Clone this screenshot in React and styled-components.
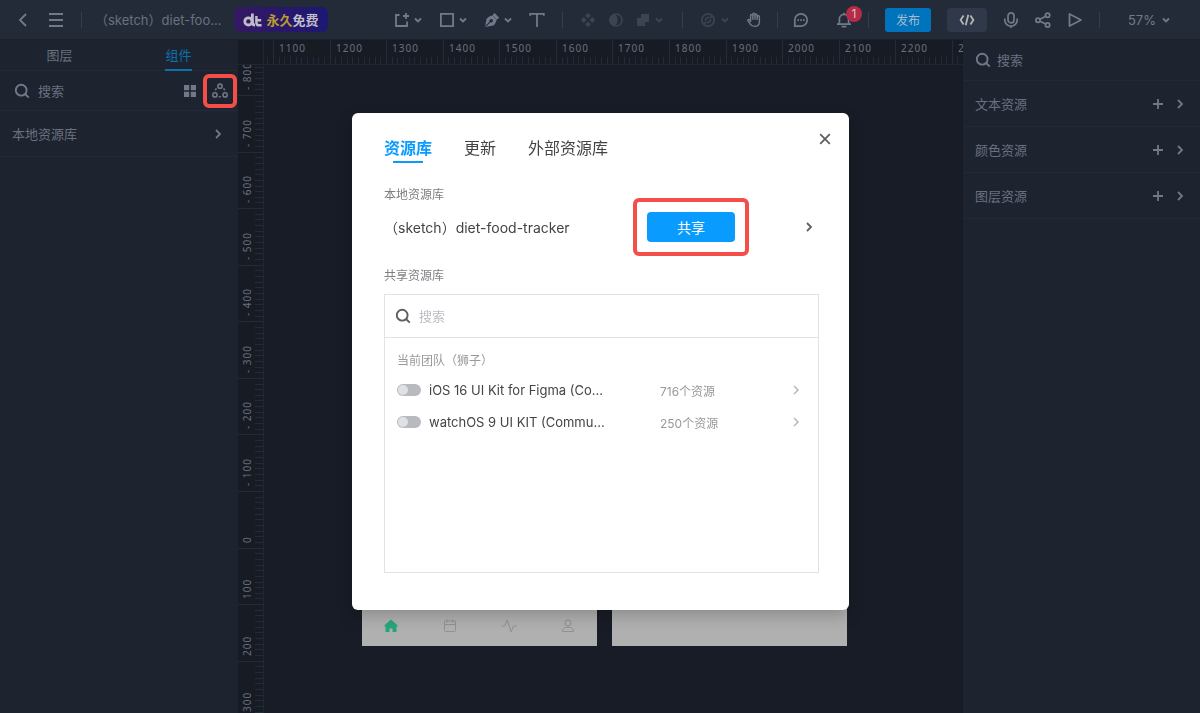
import styled, { createGlobalStyle } from "styled-components";

const GlobalStyle = createGlobalStyle`
  * {
    box-sizing: border-box;
  }

  body {
    margin: 0;
    background-color: #181c26;
    color: #6b7080;
    font-family: Inter, "Noto Sans CJK SC", sans-serif;
    font-size: 13px;
  }

  button,
  input {
    font: inherit;
    color: inherit;
  }

  button {
    display: inline-flex;
    align-items: center;
    justify-content: center;
    flex: none;
    padding: 0;
    border: none;
    background: none;
    cursor: pointer;
  }

  svg {
    display: block;
    flex: none;
  }
`;

/* ---------- icons ---------- */

const Stroke = styled.svg.attrs({ fill: "none", stroke: "currentColor" })``;

function Chevron({ size = 12, width = 1.8, dir = "right" }) {
  const d = dir === "down" ? "M3 4.5l3 3 3-3" : "M4 2l4 4-4 4";
  return (
    <Stroke width={size} height={size} viewBox="0 0 12 12" strokeWidth={width}>
      <path d={d} />
    </Stroke>
  );
}

function SearchIcon() {
  return (
    <Stroke width="16" height="16" viewBox="0 0 16 16" strokeWidth="1.9">
      <circle cx="7.2" cy="7.2" r="5.4" />
      <path d="M11 11l3.8 3.6" />
    </Stroke>
  );
}

function PlusIcon() {
  return (
    <Stroke width="12" height="12" viewBox="0 0 12 12" strokeWidth="1.8">
      <path d="M6 1v10M1 6h10" />
    </Stroke>
  );
}

function BackIcon() {
  return (
    <Stroke width="16" height="16" viewBox="0 0 16 16" strokeWidth="1.8">
      <path d="M11 2L5 8l6 6" />
    </Stroke>
  );
}

function MenuIcon() {
  return (
    <Stroke width="16" height="16" viewBox="0 0 16 16" strokeWidth="1.8">
      <path d="M1 2h14M1 8h14M1 14h14" />
    </Stroke>
  );
}

function LogoIcon() {
  return (
    <Stroke width="20" height="14" viewBox="0 0 20 14" strokeWidth="2.8">
      <circle cx="5.4" cy="8.4" r="3.6" />
      <path d="M9.4 0.6v7.8c0 2.4 1 3.8 2.6 3.8" />
      <path
        d="M13.4 3v6.4c0 2 1 2.9 2.6 2.9h2.6M13.4 7.2h4.8"
        strokeWidth="2.5"
      />
    </Stroke>
  );
}

function ArtboardIcon() {
  return (
    <Stroke width="16" height="16" viewBox="0 0 16 16" strokeWidth="1.8">
      <path d="M5.5 3H2v11h11V9.5M12 1v6M9 4h6" />
    </Stroke>
  );
}

function RectIcon() {
  return (
    <Stroke width="16" height="16" viewBox="0 0 16 16" strokeWidth="1.8">
      <path d="M1.9 1.9h12.2v12.2H1.9z" />
    </Stroke>
  );
}

function PenIcon() {
  return (
    <svg width="16" height="16" viewBox="0 0 16 16">
      <path
        d="M1 15L2.6 6.8C4.4 4.6 6.4 4.4 8.2 3.6l4.4 4.4c-.8 1.8-1 3.8-3.2 5.4z"
        fill="currentColor"
      />
      <path d="M8.4 3.4l2.1-2.4 4.7 4.700-2.400 2.100z" fill="currentColor" />
      <path d="M1.6 14.4L6.6 9.4" stroke="#242b38" strokeWidth="1.2" />
      <circle cx="7.2" cy="8.8" r="1.8" fill="#242b38" />
    </svg>
  );
}

function TextIcon() {
  return (
    <Stroke width="16" height="16" viewBox="0 0 16 16" strokeWidth="1.8">
      <path d="M1.2 3.8V1.9h13.6v1.9M8 1.9V15" />
    </Stroke>
  );
}

function ComponentIcon() {
  return (
    <svg width="16" height="16" viewBox="0 0 16 16" fill="currentColor">
      <path d="M8 0.8l2.9 2.9L8 6.6 5.1 3.7zM8 9.4l2.9 2.9L8 15.2l-2.9-2.9zM3.7 5.1L6.6 8l-2.9 2.9L0.8 8zM12.3 5.1L15.2 8l-2.900 2.900L9.400 8z" />
    </svg>
  );
}

function MaskIcon() {
  return (
    <svg width="16" height="16" viewBox="0 0 16 16">
      <circle
        cx="8"
        cy="8"
        r="6"
        fill="none"
        stroke="currentColor"
        strokeWidth="1.6"
      />
      <path d="M7 2a6 6 0 0 0 0 12c3.4-2.6 3.4-9.4 0-12z" fill="currentColor" />
    </svg>
  );
}

function UnionIcon() {
  return (
    <svg width="14" height="14" viewBox="0 0 14 14" fill="currentColor">
      <path d="M5 1h8v8H9v4H1V5h4z" />
    </svg>
  );
}

function SlashIcon() {
  return (
    <Stroke width="16" height="16" viewBox="0 0 16 16" strokeWidth="1.7">
      <circle cx="8" cy="8" r="6.2" />
      <path d="M5.8 9a2.4 2.4 0 0 1 3.2-3.2M10.2 7a2.4 2.4 0 0 1-3.2 3.2M3.6 12.4l2.400-2.400M10 6l2.400-2.400" />
    </Stroke>
  );
}

function HandIcon() {
  return (
    <Stroke
      width="16"
      height="16"
      viewBox="0 0 16 16"
      strokeWidth="1.4"
      strokeLinecap="round"
      strokeLinejoin="round"
    >
      <path d="M4.6 9.4V3.6a1.1 1.1 0 0 1 2.2 0V2.2a1.1 1.1 0 0 1 2.2 0v1a1.1 1.1 0 0 1 2.2 0v1.6a1.1 1.1 0 0 1 2.2 0v4.6c0 3.2-2 5-4.8 5-2.4 0-3.6-1-4.6-2.6L1.9 8.6c-.5-1 .8-1.6 1.5-.8z" />
      <path d="M6.8 3.6v3.6M9 3.2v4M11.2 4v3.4" />
    </Stroke>
  );
}

function ChatIcon() {
  return (
    <svg width="16" height="16" viewBox="0 0 16 16">
      <path
        d="M1.8 14.2V8A6.2 6.2 0 1 1 8 14.2z"
        fill="none"
        stroke="currentColor"
        strokeWidth="1.7"
      />
      <path
        d="M4.4 7.3h1.6v1.6H4.4zM7.2 7.3h1.6v1.6H7.2zM10 7.3h1.6v1.6H10z"
        fill="currentColor"
      />
    </svg>
  );
}

function BellIcon() {
  return (
    <Stroke width="16" height="16" viewBox="0 0 16 16" strokeWidth="1.7">
      <path d="M1 12.2h14M3.4 12V7a4.6 4.6 0 0 1 9.2 0v5M8 2.5V0.8" />
      <path d="M5.6 14.6h4.8" />
    </Stroke>
  );
}

function CodeIcon() {
  return (
    <Stroke width="16" height="16" viewBox="0 0 16 16" strokeWidth="1.8">
      <path d="M4.6 3.4L1.6 8l3 4.6M11.4 3.4l3 4.6-3 4.6M9.3 2.8L6.7 13.2" />
    </Stroke>
  );
}

function MicIcon() {
  return (
    <Stroke width="16" height="16" viewBox="0 0 16 16" strokeWidth="1.7">
      <rect x="5" y="0.9" width="6" height="10" rx="3" />
      <path d="M1.8 6.5v1.4a6.2 6.2 0 0 0 12.4 0V6.5M8 14v2" />
    </Stroke>
  );
}

function ShareIcon() {
  return (
    <Stroke width="16" height="16" viewBox="0 0 16 16" strokeWidth="1.8">
      <circle cx="3" cy="8.2" r="2.1" />
      <circle cx="12.6" cy="3.2" r="2.1" />
      <circle cx="12.6" cy="13" r="2.1" />
      <path d="M5 7.2l5.7-3M5 9.2l5.7 2.8" />
    </Stroke>
  );
}

function PlayIcon() {
  return (
    <Stroke
      width="16"
      height="16"
      viewBox="0 0 16 16"
      strokeWidth="1.8"
      strokeLinejoin="round"
    >
      <path d="M2.5 2v12L14 8z" />
    </Stroke>
  );
}

function GridIcon() {
  return (
    <svg width="14" height="14" viewBox="0 0 14 14" fill="currentColor">
      <path d="M1 1h5.2v5.2H1zM7.8 1H13v5.2H7.8zM1 7.8h5.2V13H1zM7.8 7.8H13V13H7.8z" />
    </svg>
  );
}

function LibraryIcon() {
  return (
    <Stroke width="16" height="16" viewBox="0 0 16 16" strokeWidth="1.6">
      <circle cx="8" cy="3.2" r="2.1" />
      <circle cx="2.9" cy="11.9" r="2.1" />
      <circle cx="13.1" cy="11.9" r="2.1" />
      <path
        d="M6.8 13.8h2.4M4.4 5.4L2.6 8.2M11.6 5.4l1.8 2.8"
        strokeDasharray="2 1.2"
      />
    </Stroke>
  );
}

function CloseIcon() {
  return (
    <Stroke width="12" height="12" viewBox="0 0 12 12" strokeWidth="1.8">
      <path d="M1.2 1.2l9.6 9.6M10.8 1.2l-9.6 9.6" />
    </Stroke>
  );
}

function HomeIcon() {
  return (
    <svg width="14" height="14" viewBox="0 0 14 14" fill="#27a57c">
      <path d="M7 .5l6.5 5.7v1.2H12.5V13H8.5V9.5h-3V13h-4V7.4H.5V6.2z" />
    </svg>
  );
}

function CalendarIcon() {
  return (
    <Stroke width="14" height="14" viewBox="0 0 14 14" strokeWidth="1">
      <rect x="1.5" y="2" width="11" height="10.5" rx="1" />
      <path d="M1.5 5.5h11M4 .5v3M10 .5v3" />
    </Stroke>
  );
}

function PulseIcon() {
  return (
    <Stroke width="16" height="14" viewBox="0 0 16 14" strokeWidth="1">
      <path d="M.5 7h3.2L6.2 1l4 12 2.3-6h3" strokeLinejoin="round" />
    </Stroke>
  );
}

function UserIcon() {
  return (
    <Stroke width="14" height="14" viewBox="0 0 14 14" strokeWidth="1">
      <circle cx="7" cy="4" r="3" />
      <path d="M1.5 12.5c0-2.5 1.2-4 3.2-4h4.6c2 0 3.2 1.5 3.2 4z" />
    </Stroke>
  );
}

/* ---------- layout ---------- */

const Page = styled.div`
  display: flex;
  flex-direction: column;
  height: 100vh;
  overflow: hidden;
`;

const TopBar = styled.header`
  display: flex;
  align-items: center;
  justify-content: space-between;
  flex: none;
  height: 40px;
  padding: 0 28px 0 15px;
  background-color: #242b38;
  border-bottom: 1px solid #1b212c;
`;

const Group = styled.div`
  display: flex;
  align-items: center;
  gap: ${({ $gap = 0 }) => $gap}px;
`;

const Divider = styled.span`
  width: 1px;
  height: 16px;
  background-color: #363d4b;
`;

const Tools = styled.div`
  display: flex;
  align-items: center;
  gap: 15px;
  margin-left: 40px;

  ${Divider} {
    margin: 0 2px;
  }
`;

const Title = styled.span`
  width: 126px;
  white-space: nowrap;
`;

const PromoBadge = styled.a`
  display: flex;
  align-items: center;
  justify-content: center;
  gap: 3px;
  width: 94px;
  height: 25px;
  border-radius: 6px;
  background-image: linear-gradient(90deg, #351862, #1c1872);
  color: #bfbcc9;
  font-weight: 700;
  text-decoration: none;
`;

const Yellow = styled.span`
  color: #b89b34;
`;

const Tool = styled.button`
  gap: ${({ $gap = 2 }) => $gap}px;
  color: ${({ $dim }) => ($dim ? "#3c4352" : "#73798a")};
`;

const Bell = styled(Tool)`
  position: relative;
`;

const Count = styled.span`
  position: absolute;
  top: -6px;
  right: -10px;
  width: 16px;
  border-radius: 8px;
  background-color: #b62c46;
  color: #cfc3ca;
  font-size: 12px;
  line-height: 16px;
`;

const PublishButton = styled.button`
  width: 46px;
  height: 24px;
  border-radius: 3px;
  background-color: #0073bd;
  color: #a9bccb;
  font-size: 12px;
`;

const CodeButton = styled.button`
  width: 40px;
  height: 24px;
  border-radius: 4px;
  background-color: #303949;
  color: #b5b5b5;
`;

const Workspace = styled.div`
  display: grid;
  grid-template-columns: 238px 1fr 237px;
  flex: 1;
  min-height: 0;
`;

const Panel = styled.aside`
  background-color: #1d232f;
`;

const PanelTabs = styled.nav`
  display: grid;
  grid-template-columns: 1fr 1fr;
  justify-items: center;
  height: 31px;
  border-bottom: 1px solid #232a37;
`;

const PanelTab = styled.button`
  height: 31px;
  border-bottom: 2px solid ${({ $active }) => ($active ? "#0b70ae" : "transparent")};
  color: ${({ $active }) => ($active ? "#0b70ae" : "#6b7080")};
`;

const PanelRow = styled.div`
  display: flex;
  align-items: center;
  gap: ${({ $gap = 6 }) => $gap}px;
  height: ${({ $height = 46 }) => $height}px;
  padding: 0 ${({ $end = 14 }) => $end}px 0 ${({ $start = 12 }) => $start}px;
  border-bottom: 1px solid #232a37;
  color: #737889;
`;

const RowLabel = styled.span`
  flex: 1;
  color: #6b7080;
`;

const SearchInput = styled.input`
  flex: 1;
  min-width: 0;
  padding: 0 2px;
  border: none;
  outline: none;
  background: none;

  &::placeholder {
    color: ${({ $light }) => ($light ? "#bbbec3" : "#6b7080")};
    opacity: 1;
  }
`;

const LibraryButton = styled.button`
  width: 34px;
  height: 34px;
  border: 4px solid #f44e49;
  border-radius: 6px;
`;

/* ---------- canvas ---------- */

const Stage = styled.main`
  display: grid;
  grid-template-columns: 26px 1fr;
  grid-template-rows: 25px 1fr;
  min-width: 0;
  min-height: 0;
  background-color: #181c26;
`;

const RulerCell = styled.div`
  overflow: hidden;
  background-color: #171b24;
  border-right: ${({ $right }) => ($right ? "1px solid #202734" : "none")};
  border-bottom: ${({ $bottom }) => ($bottom ? "1px solid #202734" : "none")};
`;

const RulerText = styled.text`
  fill: #6a6f7e;
  font-family: "Noto Sans", sans-serif;
  font-size: 10px;
  letter-spacing: 1px;
`;

const Canvas = styled.div`
  position: relative;
  overflow: hidden;
`;

const Artboard = styled.section`
  position: absolute;
  top: 85px;
  left: ${({ $x }) => $x}px;
  display: flex;
  flex-direction: column;
  justify-content: flex-end;
  width: 235px;
  height: 496px;
  background-color: #b0b0b0;
`;

const TabBar = styled.div`
  display: grid;
  grid-template-columns: repeat(4, 1fr);
  justify-items: center;
  align-items: center;
  height: 40px;
  color: #8f9192;
`;

/* ---------- dialog ---------- */

const Overlay = styled.div`
  position: fixed;
  inset: 0;
  display: flex;
  align-items: center;
  justify-content: center;
  padding: 10px 0 0 1px;
`;

const Dialog = styled.section`
  position: relative;
  width: 497px;
  padding: 24px 30px 37px 32px;
  border-radius: 6px;
  background-color: #fff;
  box-shadow: 0 6px 16px rgba(0, 0, 0, 0.2);
  color: #444;
`;

const CloseButton = styled.button`
  position: absolute;
  top: 20px;
  right: 18px;
  color: #5d5f63;
`;

const DialogTabs = styled.nav`
  display: flex;
  gap: 32px;
  margin-bottom: 26px;
`;

const DialogTab = styled.button`
  position: relative;
  height: 24px;
  padding-bottom: 4px;
  color: ${({ $active }) => ($active ? "#0a9bff" : "#444")};
  font-size: 16px;
  font-weight: ${({ $active }) => ($active ? 700 : 400)};

  &::after {
    content: "";
    position: absolute;
    top: 24px;
    left: 9px;
    right: 9px;
    height: 2px;
    background-color: ${({ $active }) => ($active ? "#0a9bff" : "transparent")};
  }
`;

const SectionTitle = styled.h2`
  margin: 0;
  color: #7c7f83;
  font-size: 12px;
  font-weight: 400;
  line-height: 16px;
`;

const LocalLibrary = styled.div`
  display: grid;
  grid-template-columns: 263px 88px 1fr;
  align-items: center;
  height: 40px;
  margin: 4px 0 21px;
  font-size: 14px;
`;

const Highlight = styled.span`
  position: relative;

  &::after {
    content: "";
    position: absolute;
    inset: -14px;
    border: 4px solid #f44e49;
    border-radius: 6px;
    pointer-events: none;
  }
`;

const ShareButton = styled.button`
  display: flex;
  width: 88px;
  height: 30px;
  border-radius: 4px;
  background-color: #0a9bff;
  color: #fff;
`;

const OpenButton = styled.button`
  justify-self: end;
  margin-right: ${({ $end = 0 }) => $end}px;
  color: ${({ $pale }) => ($pale ? "#b9bbbf" : "#5d5f63")};
`;

const LibraryBox = styled.div`
  min-height: 279px;
  margin-top: 10px;
  border: 1px solid #e3e3e3;
`;

const LibrarySearch = styled.div`
  display: flex;
  align-items: center;
  gap: 6px;
  height: 43px;
  padding: 0 10px;
  border-bottom: 1px solid #e3e3e3;
  color: #5d5f63;
`;

const TeamName = styled.h3`
  margin: 14px 12px 4px;
  color: #97999c;
  font-size: 12px;
  font-weight: 400;
  line-height: 18px;
`;

const LibraryRow = styled.div`
  display: grid;
  grid-template-columns: 263px 1fr 12px;
  align-items: center;
  height: 32px;
  padding: 0 16px 0 12px;
`;

const LibraryName = styled.label`
  display: flex;
  align-items: center;
  gap: 8px;
  font-size: 13px;
`;

const Amount = styled.span`
  color: #97999c;
  font-size: 12px;
`;

const Toggle = styled.input`
  appearance: none;
  display: flex;
  align-items: center;
  flex: none;
  width: 24px;
  height: 12px;
  margin: 0;
  padding: 1px;
  border-radius: 6px;
  background-color: #b7bbc0;

  &::before {
    content: "";
    width: 10px;
    height: 10px;
    border-radius: 50%;
    background-color: #dfe1e4;
  }

  &:checked {
    justify-content: flex-end;
    background-color: #0a9bff;
  }
`;

const STEP = 56.57;

const styles = ["文本资源", "颜色资源", "图层资源"];

const libraries = [
  { name: "iOS 16 UI Kit for Figma (Co...", amount: "716个资源" },
  { name: "watchOS 9 UI KIT (Commu...", amount: "250个资源" },
];

function Ruler({ first, origin, count, vertical }) {
  const marks = Array.from({ length: count }, (_, i) => ({
    value: first + i * 100,
    at: origin + i * STEP,
  }));
  const minor = Array.from({ length: (count + 1) * 10 }, (_, i) =>
    Math.round(origin - STEP + (i * STEP) / 10)
  );

  if (vertical) {
    return (
      <svg width="25" height="100%">
        {minor.map((y) => (
          <rect key={y} x="17" y={y} width="8" height="1" fill="#242b38" />
        ))}
        {marks.map(({ value, at }) => (
          <g key={value}>
            <rect y={Math.round(at)} width="25" height="1" fill="#242b38" />
            <RulerText transform={`translate(13 ${Math.round(at) - 5}) rotate(-90)`}>
              {value < 0 ? `- ${-value}` : value}
            </RulerText>
          </g>
        ))}
      </svg>
    );
  }

  return (
    <svg width="100%" height="24">
      {minor.map((x) => (
        <rect key={x} x={x} y="17" width="1" height="7" fill="#242b38" />
      ))}
      {marks.map(({ value, at }) => (
        <g key={value}>
          <rect x={Math.round(at)} width="1" height="24" fill="#242b38" />
          <RulerText x={Math.round(at) + 6} y="12">
            {value}
          </RulerText>
        </g>
      ))}
    </svg>
  );
}

function Header() {
  return (
    <TopBar>
      <Group $gap={17}>
        <Tool aria-label="返回">
          <BackIcon />
        </Tool>
        <Tool aria-label="菜单">
          <MenuIcon />
        </Tool>
        <Group $gap={13}>
          <Divider />
          <Title>（sketch）diet-foo...</Title>
          <PromoBadge href="#promo">
            <LogoIcon />
            <span>
              <Yellow>永久</Yellow>免费
            </span>
          </PromoBadge>
        </Group>
      </Group>

      <Tools>
        <Tool aria-label="画板">
          <ArtboardIcon />
          <Chevron dir="down" />
        </Tool>
        <Tool aria-label="矩形">
          <RectIcon />
          <Chevron dir="down" />
        </Tool>
        <Tool aria-label="钢笔">
          <PenIcon />
          <Chevron dir="down" />
        </Tool>
        <Tool aria-label="文本">
          <TextIcon />
        </Tool>
        <Divider />
        <Group $gap={12}>
          <Tool $dim aria-label="组件">
            <ComponentIcon />
          </Tool>
          <Tool $dim aria-label="蒙版">
            <MaskIcon />
          </Tool>
          <Tool $dim $gap={3} aria-label="布尔运算">
            <UnionIcon />
            <Chevron dir="down" />
          </Tool>
        </Group>
        <Divider />
        <Tool $dim $gap={3} aria-label="描边">
          <SlashIcon />
          <Chevron dir="down" />
        </Tool>
        <Group $gap={13}>
          <Tool aria-label="移动">
            <HandIcon />
          </Tool>
          <Divider />
          <Tool aria-label="评论">
            <ChatIcon />
          </Tool>
        </Group>
      </Tools>

      <Group $gap={16}>
        <Bell aria-label="通知">
          <BellIcon />
          <Count>1</Count>
        </Bell>
        <Divider />
        <PublishButton>发布</PublishButton>
        <CodeButton aria-label="代码">
          <CodeIcon />
        </CodeButton>
        <Tool aria-label="语音">
          <MicIcon />
        </Tool>
        <Tool aria-label="分享">
          <ShareIcon />
        </Tool>
        <Tool aria-label="播放">
          <PlayIcon />
        </Tool>
        <Group $gap={28}>
          <Divider />
          <Tool $gap={4}>
            57%
            <Chevron dir="down" />
          </Tool>
        </Group>
      </Group>
    </TopBar>
  );
}

function LeftPanel() {
  return (
    <Panel>
      <PanelTabs>
        <PanelTab>图层</PanelTab>
        <PanelTab $active>组件</PanelTab>
      </PanelTabs>
      <PanelRow $height={40} $start={14} $end={1}>
        <SearchIcon />
        <SearchInput placeholder="搜索" aria-label="搜索组件" />
        <button aria-label="网格视图">
          <GridIcon />
        </button>
        <LibraryButton aria-label="资源库">
          <LibraryIcon />
        </LibraryButton>
      </PanelRow>
      <PanelRow>
        <RowLabel>本地资源库</RowLabel>
        <button aria-label="展开本地资源库">
          <Chevron />
        </button>
      </PanelRow>
    </Panel>
  );
}

function RightPanel() {
  return (
    <Panel>
      <PanelRow $height={41} $gap={4}>
        <SearchIcon />
        <SearchInput placeholder="搜索" aria-label="搜索资源" />
      </PanelRow>
      {styles.map((name) => (
        <PanelRow key={name} $gap={10}>
          <RowLabel>{name}</RowLabel>
          <button aria-label={`添加${name}`}>
            <PlusIcon />
          </button>
          <button aria-label={`展开${name}`}>
            <Chevron />
          </button>
        </PanelRow>
      ))}
    </Panel>
  );
}

function LibraryDialog() {
  return (
    <Overlay>
      <Dialog role="dialog" aria-label="资源库">
        <CloseButton aria-label="关闭">
          <CloseIcon />
        </CloseButton>
        <DialogTabs>
          <DialogTab $active>资源库</DialogTab>
          <DialogTab>更新</DialogTab>
          <DialogTab>外部资源库</DialogTab>
        </DialogTabs>

        <SectionTitle>本地资源库</SectionTitle>
        <LocalLibrary>
          <span>（sketch）diet-food-tracker</span>
          <Highlight>
            <ShareButton>共享</ShareButton>
          </Highlight>
          <OpenButton $end={4} aria-label="打开本地资源库">
            <Chevron />
          </OpenButton>
        </LocalLibrary>

        <SectionTitle>共享资源库</SectionTitle>
        <LibraryBox>
          <LibrarySearch>
            <SearchIcon />
            <SearchInput $light placeholder="搜索" aria-label="搜索资源库" />
          </LibrarySearch>
          <TeamName>当前团队（狮子）</TeamName>
          {libraries.map(({ name, amount }) => (
            <LibraryRow key={name}>
              <LibraryName>
                <Toggle type="checkbox" />
                {name}
              </LibraryName>
              <Amount>{amount}</Amount>
              <OpenButton $pale aria-label={`打开 ${name}`}>
                <Chevron width={1.6} />
              </OpenButton>
            </LibraryRow>
          ))}
        </LibraryBox>
      </Dialog>
    </Overlay>
  );
}

function App() {
  return (
    <>
      <GlobalStyle />
      <Page>
        <Header />
        <Workspace>
          <LeftPanel />
          <Stage>
            <RulerCell $right $bottom />
            <RulerCell $bottom>
              <Ruler first={1100} origin={9} count={13} />
            </RulerCell>
            <RulerCell $right>
              <Ruler vertical first={-800} origin={30} count={12} />
            </RulerCell>
            <Canvas>
              <Artboard $x={98}>
                <TabBar>
                  <HomeIcon />
                  <CalendarIcon />
                  <PulseIcon />
                  <UserIcon />
                </TabBar>
              </Artboard>
              <Artboard $x={348} />
            </Canvas>
          </Stage>
          <RightPanel />
        </Workspace>
      </Page>
      <LibraryDialog />
    </>
  );
}

export default App;
